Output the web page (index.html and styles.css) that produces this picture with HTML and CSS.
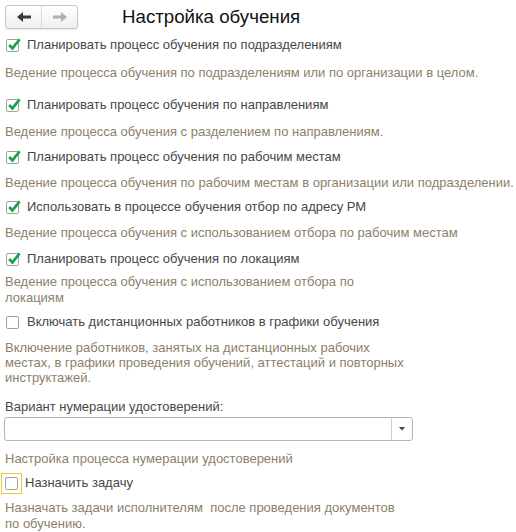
FILE: index.html
```html
<!DOCTYPE html>
<html lang="ru">
<head>
<meta charset="utf-8">
<link rel="stylesheet" href="styles.css">
</head>
<body>
<div class="page">
  <div class="header">
    <div class="nav">
      <div class="nav-btn">
        <svg width="14" height="10" viewBox="0 0 14 10"><path d="M0 5 L6 0 L6 3.5 L14 3.5 L14 6.5 L6 6.5 L6 10 Z" fill="#3a3a3a"/></svg>
      </div>
      <div class="nav-btn">
        <svg width="14" height="10" viewBox="0 0 14 10"><path d="M14 5 L8 0 L8 3.5 L0 3.5 L0 6.5 L8 6.5 L8 10 Z" fill="#b0b0b0"/></svg>
      </div>
    </div>
    <div class="title">Настройка обучения</div>
  </div>

  <div class="cb g-first"><span class="box"><svg class="check" viewBox="0 0 14 14" width="14" height="14"><path d="M2.2 7 L5.4 10.4 L12.6 1.4" fill="none" stroke="#18a04a" stroke-width="2.6"/></svg></span><span>Планировать процесс обучения по подразделениям</span></div>
  <div class="desc g12">Ведение процесса обучения по подразделениям или по организации в целом.</div>

  <div class="cb g16"><span class="box"><svg class="check" viewBox="0 0 14 14" width="14" height="14"><path d="M2.2 7 L5.4 10.4 L12.6 1.4" fill="none" stroke="#18a04a" stroke-width="2.6"/></svg></span><span>Планировать процесс обучения по направлениям</span></div>
  <div class="desc g11">Ведение процесса обучения с разделением по направлениям.</div>

  <div class="cb g9"><span class="box"><svg class="check" viewBox="0 0 14 14" width="14" height="14"><path d="M2.2 7 L5.4 10.4 L12.6 1.4" fill="none" stroke="#18a04a" stroke-width="2.6"/></svg></span><span>Планировать процесс обучения по рабочим местам</span></div>
  <div class="desc g10">Ведение процесса обучения по рабочим местам в организации или подразделении.</div>

  <div class="cb g8"><span class="box"><svg class="check" viewBox="0 0 14 14" width="14" height="14"><path d="M2.2 7 L5.4 10.4 L12.6 1.4" fill="none" stroke="#18a04a" stroke-width="2.6"/></svg></span><span>Использовать в процессе обучения отбор по адресу РМ</span></div>
  <div class="desc g10">Ведение процесса обучения с использованием отбора по рабочим местам</div>

  <div class="cb g10"><span class="box"><svg class="check" viewBox="0 0 14 14" width="14" height="14"><path d="M2.2 7 L5.4 10.4 L12.6 1.4" fill="none" stroke="#18a04a" stroke-width="2.6"/></svg></span><span>Планировать процесс обучения по локациям</span></div>
  <div class="desc narrow g7">Ведение процесса обучения с использованием отбора по локациям</div>

  <div class="cb g8"><span class="box"></span><span>Включать дистанционных работников в графики обучения</span></div>
  <div class="desc narrow tight g10">Включение работников, занятых на дистанционных рабочих местах, в графики проведения обучений, аттестаций и повторных инструктажей.</div>

  <div class="field-label g14">Вариант нумерации удостоверений:</div>
  <div class="select g2">
    <div class="select-value"></div>
    <div class="select-btn"><svg width="6" height="4" viewBox="0 0 6 4"><path d="M0 0 L6 0 L3 3.5 Z" fill="#444"/></svg></div>
  </div>
  <div class="desc g10">Настройка процесса нумерации удостоверений</div>

  <div class="cb g8"><span class="focus"><span class="box"></span></span><span>Назначить задачу</span></div>
  <div class="desc narrow g9">Назначать задачи исполнителям&nbsp; после проведения документов по обучению.</div>
</div>
</body>
</html>
```

FILE: styles.css
```css
html, body {
  margin: 0;
  padding: 0;
  background: #ffffff;
}

body {
  font-family: "Liberation Sans", Arial, sans-serif;
  font-size: 13px;
  color: #474747;
}

.page {
  width: 516px;
  height: 532px;
  overflow: hidden;
  display: flex;
  flex-direction: column;
  align-items: flex-start;
}

.header {
  display: flex;
  align-items: center;
  padding: 5px 0 0 5px;
  height: 24px;
}

.nav {
  display: flex;
  width: 71px;
  height: 22px;
  border: 1px solid #c6c6c6;
  border-radius: 3px;
  background: linear-gradient(#ffffff, #efefef);
  box-shadow: 0 1px 1px rgba(0, 0, 0, 0.08);
}

.nav-btn {
  flex: 1;
  display: flex;
  align-items: center;
  justify-content: center;
}

.nav-btn + .nav-btn {
  border-left: 1px solid #dadada;
}

.title {
  margin-left: 44px;
  font-size: 18.7px;
  color: #111111;
  line-height: 24px;
}

.cb {
  display: flex;
  align-items: center;
  height: 16px;
  line-height: 16px;
  padding-left: 6px;
}

.box {
  width: 11px;
  height: 11px;
  border: 1px solid #a2a2a2;
  border-radius: 2px;
  background: #fff;
  margin-right: 8px;
  position: relative;
  flex: none;
}

.check {
  position: absolute;
  left: 0;
  top: -2px;
  overflow: visible;
}

.focus {
  display: flex;
  align-items: center;
  justify-content: center;
  width: 21px;
  height: 21px;
  margin-left: -5px;
  margin-right: 3px;
  border: 1px solid #f0c830;
  box-sizing: border-box;
}

.focus .box {
  margin-right: 0;
}

.desc {
  padding-left: 5px;
  line-height: 16px;
  color: #8d806b;
  white-space: nowrap;
}

.desc.narrow {
  white-space: normal;
  width: 405px;
}

.desc.tight {
  line-height: 15px;
}

.field-label {
  padding-left: 5px;
  line-height: 16px;
  color: #474747;
}

.select {
  display: flex;
  margin-left: 4px;
  width: 409px;
  height: 24px;
  box-sizing: border-box;
  border: 1px solid #b5b5b5;
  border-radius: 3px;
  background: #fff;
}

.select-value {
  flex: 1;
}

.select-btn {
  width: 20px;
  border-left: 1px solid #cfcfcf;
  display: flex;
  align-items: center;
  justify-content: center;
}

.g-first { margin-top: 8px; }
.g2 { margin-top: 2px; }
.g7 { margin-top: 7px; }
.g8 { margin-top: 8px; }
.g9 { margin-top: 9px; }
.g10 { margin-top: 10px; }
.g11 { margin-top: 11px; }
.g12 { margin-top: 12px; }
.g14 { margin-top: 14px; }
.g16 { margin-top: 16px; }
```
